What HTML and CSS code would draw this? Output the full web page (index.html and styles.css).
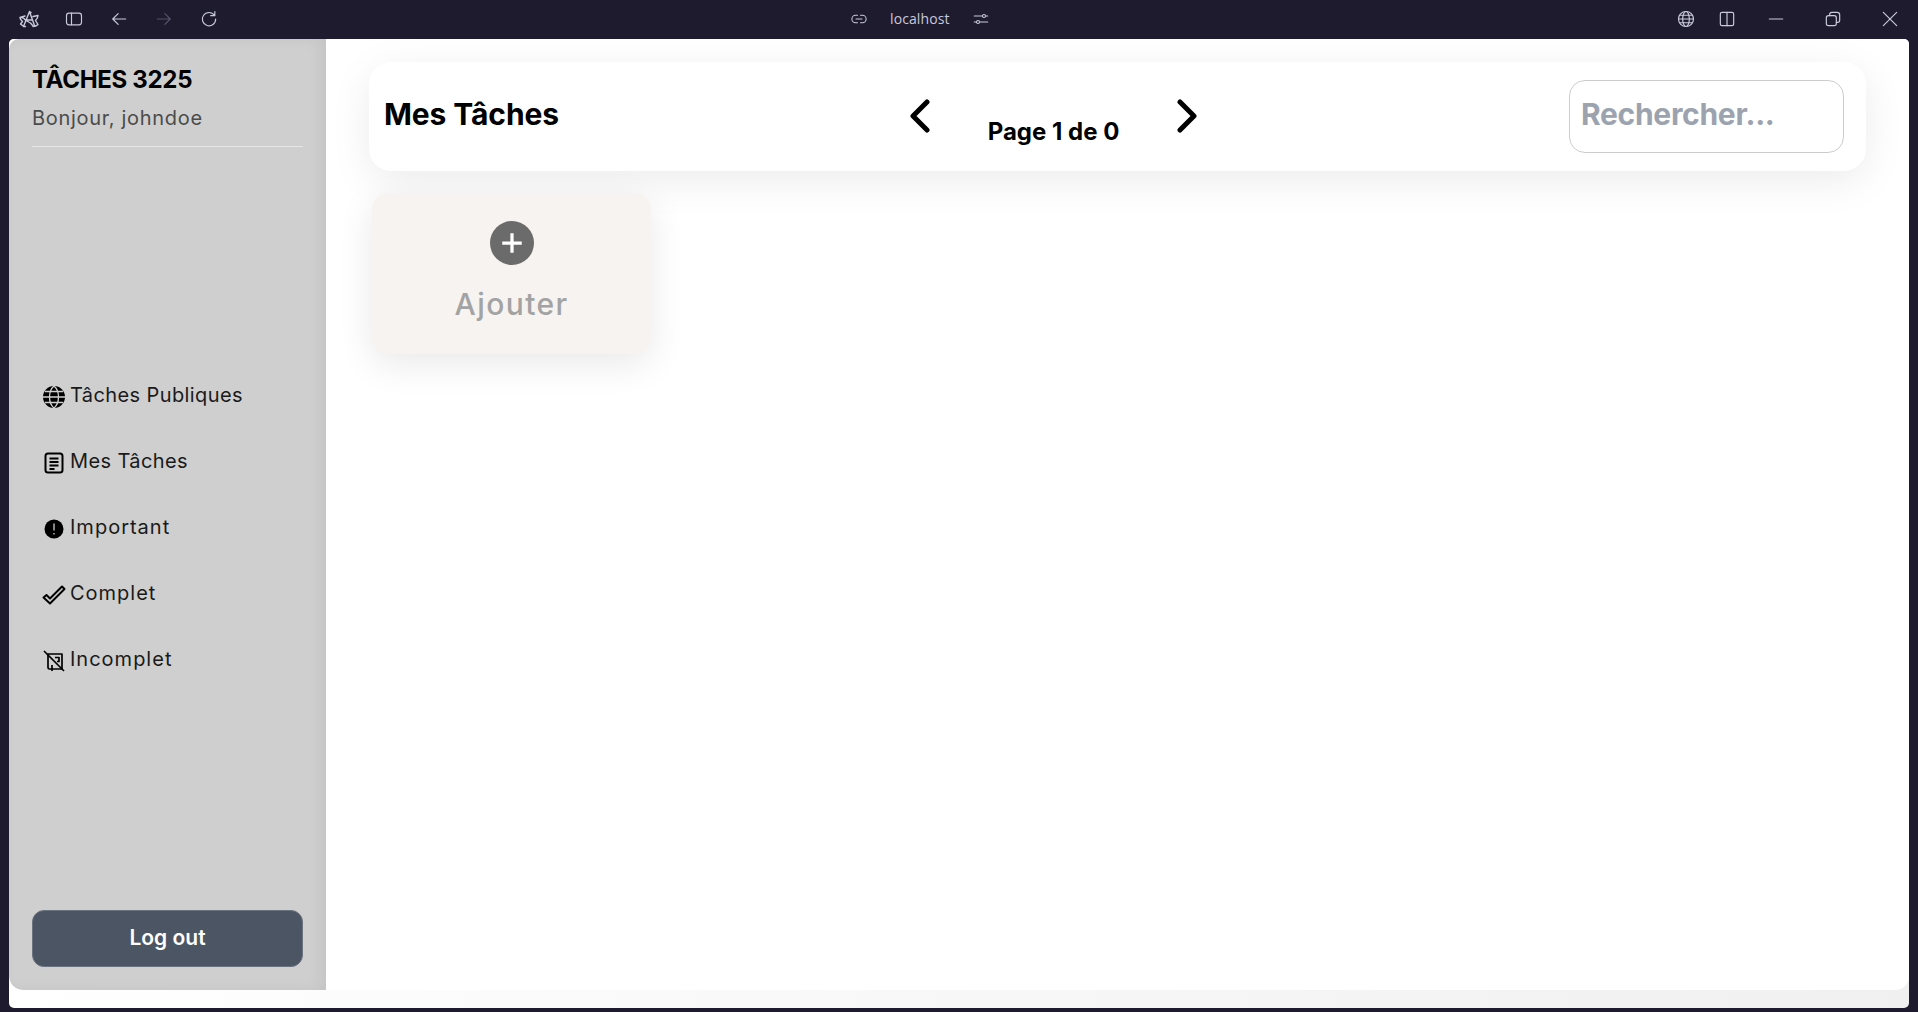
FILE: index.html
```html
<!DOCTYPE html>
<html lang="fr">
<head>
    <meta charset="UTF-8" />
    <meta name="viewport" content="width=device-width, initial-scale=1.0"/>
    <title>Mes Tâches</title>
    <link rel="stylesheet" href="styles.css">
</head>
<body>
<div class="titlebar">
    <div class="bar-left">
        <svg class="bar-icon" viewBox="0 0 20 18"><path d="M4.500 16.500 10.500 1.500l1.500 1-1 .5 4.500 12.500-1 1-3-3.500L7 10.500C5 8 3 7 1 7.500l5-1.500M8 10h5.500M1 7.500c0 2 1.500 3 2.500 4L1.500 14c1.500 1.500 3 2.500 5 2.500M14 6.500l5-1c0 2-1 3.500-2.500 5l2.500 4c-1 1-3 2-5 2"/></svg>
        <svg class="bar-icon" viewBox="0 0 24 24"><rect x="3" y="5" width="18" height="14" rx="3"/><path d="M9 5v14"/></svg>
        <svg class="bar-icon" viewBox="0 0 24 24"><path d="M20 12H5M11 5.500 4.500 12l6.500 6.500"/></svg>
        <svg class="bar-icon dim" viewBox="0 0 24 24"><path d="M4 12h15M13 5.500l6.500 6.500-6.500 6.500"/></svg>
        <svg class="bar-icon" viewBox="0 0 24 24"><path d="M18.500 7.500A8 8 0 1 0 20 12M19 3v5h-5"/></svg>
    </div>
    <div class="bar-center">
        <svg class="bar-icon small" viewBox="0 0 24 24"><path d="M10 7H7.500a5 5 0 0 0 0 10H10M14 7h2.500a5 5 0 0 1 0 10H14M8 12h8"/></svg>
        <span class="bar-url">localhost</span>
        <svg class="bar-icon small" viewBox="0 0 24 24"><path d="M3 8h11M18 8h3M3 16h3M10 16h11"/><circle cx="16" cy="8" r="2"/><circle cx="8" cy="16" r="2"/></svg>
    </div>
    <div class="bar-right">
        <svg class="bar-icon globe" viewBox="0 0 24 24"><circle cx="12" cy="12" r="9"/><ellipse cx="12" cy="12" rx="4" ry="9"/><path d="M3 12h18M4.200 7.500h15.600M4.200 16.500h15.600"/></svg>
        <svg class="bar-icon split" viewBox="0 0 24 24"><rect x="4" y="4" width="16" height="16" rx="2"/><path d="M12 4v16"/></svg>
        <svg class="bar-icon minimize" viewBox="0 0 24 24"><path d="M4 12h16"/></svg>
        <svg class="bar-icon restore" viewBox="0 0 24 24"><rect x="4" y="8" width="12" height="12" rx="2.500"/><path d="M8 8V6.500A2.500 2.500 0 0 1 10.500 4H17a3 3 0 0 1 3 3v6.500a2.500 2.500 0 0 1-2.500 2.500H16"/></svg>
        <svg class="bar-icon" viewBox="0 0 24 24"><path d="M4 4l16 16M20 4 4 20"/></svg>
    </div>
</div>

<div class="window">
    <div class="app">
        <aside class="sidebar">
            <h2 class="brand">TÂCHES 3225</h2>
            <p class="hello">Bonjour, johndoe</p>
            <ul class="nav">
                <li class="tight">
                    <svg class="nav-icon" viewBox="0 0 24 24"><circle class="solid" cx="12" cy="12" r="11"/><path class="cut" d="M1 12h22M3 6.500h18M3 17.500h18M12 1c-6 5-6 17 0 22M12 1c6 5 6 17 0 22"/></svg>
                    Tâches Publiques
                </li>
                <li class="tight">
                    <svg class="nav-icon" viewBox="0 0 24 24"><rect class="line" x="3.500" y="2.500" width="17" height="19" rx="2.500"/><path class="line" d="M7.500 7.500h9M7.500 11h9M7.500 14.500h9M7.500 18h5"/></svg>
                    Mes Tâches
                </li>
                <li>
                    <svg class="nav-icon" viewBox="0 0 24 24"><circle class="solid" cx="12" cy="12" r="9.500"/><path class="cut" d="M12 6.500v7M12 16v1.500"/></svg>
                    Important
                </li>
                <li>
                    <svg class="nav-icon" viewBox="0 0 24 24"><path class="line" d="M1.500 14.500 8 20.500 22.500 6l-2.500-2.500L8 15.500l-3.500-3.500z"/></svg>
                    Complet
                </li>
                <li>
                    <svg class="nav-icon" viewBox="0 0 24 24"><path class="thin" d="M6 5h14v15H7.500A1.500 1.500 0 0 1 6 18.500zM10 16v6M13 8.500h4v4h-2"/><path class="thin" d="M2 2l20 20"/></svg>
                    Incomplet
                </li>
            </ul>
            <button class="logout" type="button">Log out</button>
        </aside>

        <main class="content">
            <header class="head-card">
                <h1 class="head-title">Mes Tâches</h1>
                <div class="pager">
                    <svg class="chevron" viewBox="0 0 20 34"><path d="M17 3 3 17l14 14"/></svg>
                    <span class="pager-text">Page 1 de 0</span>
                    <svg class="chevron" viewBox="0 0 20 34"><path d="M3 3l14 14L3 31"/></svg>
                </div>
                <input class="search" type="text" placeholder="Rechercher..." />
            </header>

            <div class="add-card">
                <span class="add-circle">
                    <svg class="add-plus" viewBox="0 0 24 24"><path d="M12 3v18M3 12h18"/></svg>
                </span>
                <span class="add-label">Ajouter</span>
            </div>
        </main>
    </div>
</div>
</body>
</html>
```

FILE: styles.css
```css
* {
    box-sizing: border-box;
}
body {
    font-family: 'Inter', sans-serif;
    background: #1e1b2e;
    margin: 0;
    padding: 0;
    height: 1012px;
    overflow: hidden;
}

/* browser chrome */
.titlebar {
    height: 39px;
    padding-bottom: 2px;
    display: flex;
    align-items: center;
    color: #c9c9dc;
}
.bar-icon {
    width: 20px;
    height: 20px;
    fill: none;
    stroke: #c9c9dc;
    stroke-width: 1.4;
    stroke-linecap: round;
    stroke-linejoin: round;
}
.bar-icon.dim {
    stroke: #55526a;
}
.bar-icon.small {
    width: 18px;
    height: 18px;
}
.bar-left {
    display: flex;
    align-items: center;
    gap: 25px;
    padding-left: 19px;
    width: 850px;
}
.bar-center {
    display: flex;
    align-items: center;
    gap: 22px;
}
.bar-url {
    font-family: 'Open Sans', sans-serif;
    font-size: 14px;
    letter-spacing: 0.1px;
}
.bar-right {
    display: flex;
    align-items: center;
    margin-left: auto;
    padding-right: 18px;
    gap: 37px;
}
.bar-right .globe {
    margin-right: -16px;
}
.bar-right .split {
    margin-right: -8px;
}

/* app window */
.window {
    margin: 0 9px;
    height: 969px;
    background: linear-gradient(to right, #ffffff, #f0f0f0);
    border-radius: 5px;
    overflow: hidden;
}
.app {
    height: 951px;
    display: flex;
    background: #ffffff;
    border-radius: 0 0 14px 14px;
    overflow: hidden;
}

/* sidebar */
.sidebar {
    width: 317px;
    flex-shrink: 0;
    background: #cfcfcf;
    border-radius: 10px 0 0 14px;
    box-shadow: inset -6px 0 14px rgba(0, 0, 0, 0.05);
    padding: 25px 23px 23px;
    display: flex;
    flex-direction: column;
}
.brand {
    margin: 0;
    font-size: 24px;
    line-height: 32px;
    font-weight: 700;
    letter-spacing: -0.3px;
    color: #000000;
}
.hello {
    margin: 9px 0 0;
    font-size: 20px;
    line-height: 26px;
    letter-spacing: 0.7px;
    color: #4b4b4b;
    padding-bottom: 15px;
    border-bottom: 1px solid #e5e5e5;
}
.nav {
    list-style: none;
    margin: 215px 0 0;
    padding: 0 0 0 10px;
}
.nav li {
    height: 66px;
    display: flex;
    align-items: center;
    gap: 4px;
    font-size: 20px;
    letter-spacing: 1px;
    color: #1a1a1a;
}
.nav li.tight {
    letter-spacing: 0.4px;
}
.nav-icon {
    width: 24px;
    height: 24px;
    flex-shrink: 0;
    position: relative;
    top: 2px;
}
.solid {
    fill: #000000;
}
.cut {
    fill: none;
    stroke: #cfcfcf;
    stroke-width: 1.3;
}
.line {
    fill: none;
    stroke: #000000;
    stroke-width: 2;
    stroke-linejoin: round;
}
.thin {
    fill: none;
    stroke: #000000;
    stroke-width: 1.7;
    stroke-linejoin: round;
}
.logout {
    margin-top: auto;
    height: 57px;
    padding-bottom: 4px;
    background: #4b5563;
    color: #ffffff;
    border: 1px solid #6b7280;
    border-radius: 12px;
    font-family: inherit;
    font-size: 21px;
    font-weight: 600;
}

/* main */
.content {
    flex: 1;
    padding: 23px 43px;
}
.head-card {
    height: 109px;
    background: #ffffff;
    border-radius: 22px;
    box-shadow: 0 10px 40px rgba(0, 0, 0, 0.08);
    display: flex;
    align-items: center;
    justify-content: space-between;
    padding: 0 22px 0 15px;
}
.head-title {
    margin: 0 0 5px;
    width: 174px;
    font-size: 30px;
    font-weight: 700;
    letter-spacing: -0.1px;
    color: #000000;
    white-space: nowrap;
}
.pager {
    display: flex;
    align-items: center;
    gap: 58px;
    margin-right: 20px;
    margin-bottom: 2px;
}
.chevron {
    width: 20px;
    height: 34px;
    fill: none;
    stroke: #000000;
    stroke-width: 5;
    stroke-linecap: round;
    stroke-linejoin: round;
}
.pager-text {
    font-size: 24px;
    font-weight: 700;
    color: #000000;
    padding-top: 31px;
}
.search {
    width: 275px;
    height: 73px;
    border: 1px solid #cccccc;
    border-radius: 16px;
    padding: 0 11px 5px;
    font-family: inherit;
    font-size: 30px;
    font-weight: 700;
    letter-spacing: -0.3px;
    background: #ffffff;
}
.search::placeholder {
    color: #9ca3af;
    opacity: 1;
}
.add-card {
    width: 279px;
    height: 161px;
    margin: 22px 0 0 3px;
    background: #f7f3f0;
    border-radius: 16px;
    box-shadow: 0 10px 36px rgba(0, 0, 0, 0.09);
    display: flex;
    flex-direction: column;
    align-items: center;
    padding-top: 28px;
    gap: 21px;
}
.add-circle {
    width: 44px;
    height: 44px;
    border-radius: 50%;
    background: #6b6b6b;
    display: flex;
    align-items: center;
    justify-content: center;
}
.add-plus {
    width: 26px;
    height: 26px;
    fill: none;
    stroke: #ffffff;
    stroke-width: 3;
}
.add-label {
    font-size: 30px;
    font-weight: 500;
    letter-spacing: 1.4px;
    color: #a3a3a3;
}
```
